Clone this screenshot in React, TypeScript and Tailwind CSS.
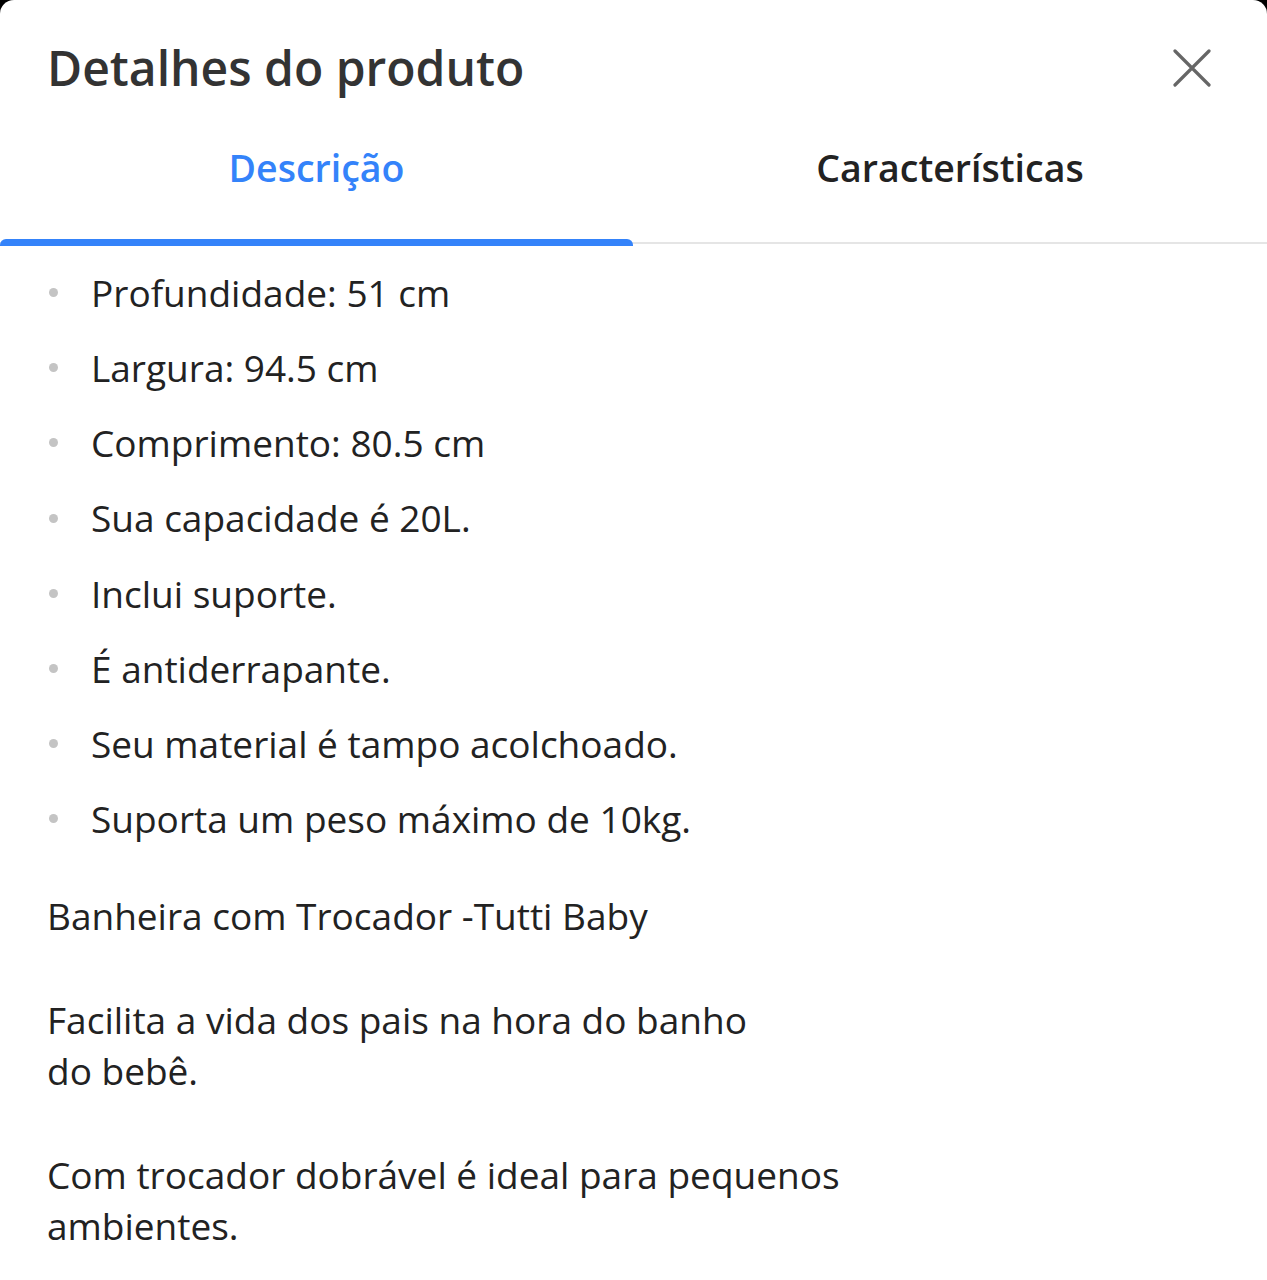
import React from "react";

const bullets = [
  "Profundidade: 51 cm",
  "Largura: 94.5 cm",
  "Comprimento: 80.5 cm",
  "Sua capacidade é 20L.",
  "Inclui suporte.",
  "É antiderrapante.",
  "Seu material é tampo acolchoado.",
  "Suporta um peso máximo de 10kg.",
];

export default function App() {
  return (
    <div className="w-[1267px] h-[1280px] bg-black overflow-hidden" style={{ fontFamily: "'Open Sans', sans-serif" }}>
      <div className="h-full bg-white rounded-t-[14px] flex flex-col">
        <div className="flex items-center justify-between pl-[47px] pr-[56px] pt-[26px] h-[110px]">
          <h1 className="text-[48px] font-semibold text-[#333] leading-none">Detalhes do produto</h1>
          <button className="w-[38px] h-[38px] flex items-center justify-center">
            <svg width="38" height="38" viewBox="0 0 38 38" fill="none">
              <path d="M2 2L36 36M36 2L2 36" stroke="#666" strokeWidth="3.2" strokeLinecap="round" />
            </svg>
          </button>
        </div>
        <div className="relative flex h-[136px]">
          <div className="w-[633px] flex items-center justify-center text-[37.5px] font-semibold text-[#3483fa] pb-[20px]">Descrição</div>
          <div className="flex-1 flex items-center justify-center text-[37.5px] font-semibold text-[#222] pb-[20px]">Características</div>
          <div className="absolute left-0 right-0 bottom-[2px] h-[2px] bg-[#e5e5e5]" />
          <div className="absolute left-0 w-[633px] bottom-0 h-[7px] bg-[#3483fa] rounded-t-[6px]" />
        </div>
        <ul className="pt-[9px]">
          {bullets.map((b) => (
            <li key={b} className="flex items-center h-[75.2px] pl-[49px]">
              <span className="w-[9px] h-[9px] rounded-full bg-[#c4c4c4] mr-[33px]" />
              <span className="text-[37px] text-[#222]">{b}</span>
            </li>
          ))}
        </ul>
        <div className="pl-[47px] pt-[33px] text-[37px] leading-[51px] text-[#222]">
          <p className="mb-[53px]">Banheira com Trocador -Tutti Baby</p>
          <p className="mb-[53px]">Facilita a vida dos pais na hora do banho<br />do bebê.</p>
          <p>Com trocador dobrável é ideal para pequenos<br />ambientes.</p>
        </div>
      </div>
    </div>
  );
}
